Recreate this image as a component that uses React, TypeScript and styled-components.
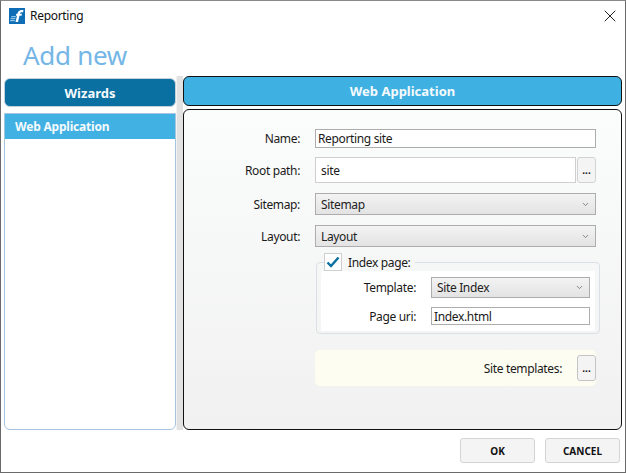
import React from 'react';
import styled, { createGlobalStyle } from 'styled-components';
import { X, ChevronDown } from 'lucide-react';

const GlobalStyle = createGlobalStyle`
  html, body {
    margin: 0;
    padding: 0;
    background: #fff;
  }
  body {
    font-family: "Noto Sans", "Open Sans", sans-serif;
    font-size: 12px;
    color: #1a1a1a;
  }
  * {
    box-sizing: border-box;
  }
`;

const Window = styled.div`
  width: 626px;
  height: 473px;
  display: flex;
  flex-direction: column;
  background: #fff;
  border: 1px solid #6a6a6a;
  border-top-color: #8a8a8a;
`;

const TitleBar = styled.div`
  height: 29px;
  flex: none;
  display: flex;
  align-items: center;
  padding: 0 8px;
  gap: 5px;
`;

const TitleText = styled.span`
  flex: 1;
  font-size: 12px;
  letter-spacing: -0.3px;
  color: #111;
`;

const CloseButton = styled.button`
  width: 20px;
  height: 20px;
  padding: 0;
  margin-right: -3px;
  display: flex;
  align-items: center;
  justify-content: center;
  background: none;
  border: 0;
  color: #222;
`;

const Heading = styled.h1`
  margin: 0;
  height: 46px;
  flex: none;
  padding-left: 22px;
  font-size: 26px;
  font-weight: 400;
  line-height: 50px;
  letter-spacing: -0.3px;
  color: #74b6e6;
`;

const Body = styled.div`
  flex: 1;
  min-height: 0;
  display: flex;
  padding: 0 3px;
`;

const LeftColumn = styled.div`
  width: 172px;
  flex: none;
  display: flex;
  flex-direction: column;
  padding-top: 2px;
  gap: 6px;
`;

const WizardsHeader = styled.div`
  height: 29px;
  flex: none;
  display: flex;
  align-items: center;
  justify-content: center;
  border: 1px solid #c6d2da;
  border-radius: 6px;
  background: #0a6fa1;
  color: #f4fafd;
  font-size: 13px;
  font-weight: 700;
`;

const WizardList = styled.ul`
  flex: 1;
  margin: 0;
  padding: 0;
  list-style: none;
  background: #fff;
  border: 1px solid #a6c4de;
  border-radius: 0 0 6px 6px;
`;

const WizardItem = styled.li`
  height: 25px;
  display: flex;
  align-items: center;
  padding-left: 10px;
  background: #41b0e3;
  color: #f4fafd;
  font-size: 12px;
  font-weight: 700;
  letter-spacing: -0.2px;
`;

const Splitter = styled.div`
  width: 7px;
  flex: none;
  background: #e2e2e2;
  border-left: 1px solid #f2f2f2;
`;

const RightColumn = styled.div`
  flex: 1;
  min-width: 0;
  display: flex;
  flex-direction: column;
  gap: 3px;
`;

const PanelHeader = styled.div`
  height: 30px;
  flex: none;
  display: flex;
  align-items: center;
  justify-content: center;
  background: #3fb0e2;
  border: 1px solid #111;
  border-radius: 6px;
  color: #f4fafd;
  font-size: 13px;
  font-weight: 700;
`;

const Panel = styled.div`
  flex: 1;
  display: flex;
  flex-direction: column;
  padding: 19px 25px 0 131px;
  background: linear-gradient(#fbfcfc, #f1f1f1);
  border: 1px solid #111;
  border-radius: 6px;
`;

const FormRow = styled.div<{ $height: number; $gap: number }>`
  display: grid;
  grid-template-columns: 1fr;
  position: relative;
  height: ${({ $height }) => $height}px;
  margin-bottom: ${({ $gap }) => $gap}px;
`;

const RowLabel = styled.label`
  position: absolute;
  right: calc(100% + 15px);
  top: 50%;
  transform: translateY(-50%);
  white-space: nowrap;
  letter-spacing: -0.35px;
`;

const TextField = styled.div<{ $roomy?: boolean }>`
  display: flex;
  align-items: center;
  height: 100%;
  padding-left: ${({ $roomy }) => ($roomy ? '5px' : '2px')};
  background: #fff;
  border: ${({ $roomy }) => ($roomy ? '1px solid #cfcfcf' : '1px solid #adadad')};
  letter-spacing: -0.35px;
`;

const FieldWithButton = styled.div`
  display: flex;
  gap: 1px;
  height: 100%;
`;

const FieldGrow = styled.div`
  flex: 1;
`;

const DotsButton = styled.button`
  width: 19px;
  height: 100%;
  flex: none;
  padding: 0 0 5px;
  display: flex;
  align-items: flex-end;
  justify-content: center;
  background: #f4f4f4;
  border: 1px solid #d2d2d2;
  border-radius: 3px;
  font-family: inherit;
  font-size: 10px;
  font-weight: 700;
  line-height: 14px;
  color: #111;
`;

const Select = styled.div`
  display: flex;
  align-items: center;
  justify-content: space-between;
  height: 100%;
  padding: 0 5px 0 5px;
  background: linear-gradient(#f3f3f3, #e3e3e3);
  border: 1px solid #adadad;
  letter-spacing: -0.35px;
  color: #222;
`;

const IndexGroup = styled.fieldset`
  margin: 6px -4px 0 1px;
  padding: 0 4px 3px;
  height: 81px;
  border: 1px solid #dbe0e4;
  border-radius: 4px;
`;

const GroupLegend = styled.legend`
  margin-left: 3px;
  padding: 0 4px 0 0;
  height: 18px;
  display: flex;
  align-items: center;
  gap: 6px;
  letter-spacing: -0.35px;
`;

const CheckBox = styled.span`
  width: 18px;
  height: 18px;
  display: flex;
  align-items: center;
  justify-content: center;
  background: #fff;
  border: 1px solid #cfcfcf;
  color: #0a6fa1;
`;

const GroupBody = styled.div`
  display: grid;
  grid-template-columns: 95px 159px;
  grid-template-rows: 21px 18px;
  row-gap: 9px;
  column-gap: 15px;
  align-items: center;
  padding: 6px 0;
  background: #fff;
  height: 60px;
`;

const GroupLabel = styled.label`
  text-align: right;
  letter-spacing: -0.35px;
`;

const TemplatesStrip = styled.div`
  margin-top: 16px;
  height: 36px;
  display: flex;
  align-items: center;
  justify-content: flex-end;
  gap: 15px;
  background: #fdfdf1;
  border-radius: 5px;
  letter-spacing: -0.35px;
`;

const StripButton = styled(DotsButton)`
  height: 26px;
  border-color: #c4c4c4;
`;

const Footer = styled.div`
  height: 42px;
  flex: none;
  display: flex;
  justify-content: flex-end;
  align-items: flex-start;
  gap: 10px;
  padding: 8px 5px 0 0;
`;

const FooterButton = styled.button`
  width: 75px;
  height: 25px;
  background: #f4f4f4;
  border: 1px solid #d4d4d4;
  border-radius: 3px;
  font-family: inherit;
  font-size: 10px;
  font-weight: 700;
  color: #111;
`;

const AppLogo = () => (
  <svg width="16" height="16" viewBox="0 0 16 16" aria-hidden="true">
    <rect width="16" height="16" fill="#0f6db5" />
    <path d="M2.500 8h4.500l-.3 1.200H2zM1.800 10h4.700l-.3 1.200H1.400zM1.200 12h4.800l-.3 1.200H.8z" fill="#8ec4ea" />
    <path
      d="M6.500 14l1.500-6.200H6.900l.4-2h1.200C9 3 11 1.600 14.500 2.300L14 4.500c-1.700-.4-2.700 0-3 1.300h2l-.5 2h-2L9 14z"
      fill="#fff"
    />
  </svg>
);

const SelectArrow = () => <ChevronDown size={9} strokeWidth={2.4} color="#777" />;

export default function App() {
  return (
    <>
      <GlobalStyle />
      <Window>
        <TitleBar>
          <AppLogo />
          <TitleText>Reporting</TitleText>
          <CloseButton>
            <X size={20} strokeWidth={1.2} />
          </CloseButton>
        </TitleBar>
        <Heading>Add new</Heading>
        <Body>
          <LeftColumn>
            <WizardsHeader>Wizards</WizardsHeader>
            <WizardList>
              <WizardItem>Web Application</WizardItem>
            </WizardList>
          </LeftColumn>
          <Splitter />
          <RightColumn>
            <PanelHeader>Web Application</PanelHeader>
            <Panel>
              <FormRow $height={18} $gap={10}>
                <RowLabel>Name:</RowLabel>
                <TextField>Reporting site</TextField>
              </FormRow>
              <FormRow $height={26} $gap={10}>
                <RowLabel>Root path:</RowLabel>
                <FieldWithButton>
                  <FieldGrow>
                    <TextField $roomy>site</TextField>
                  </FieldGrow>
                  <DotsButton>...</DotsButton>
                </FieldWithButton>
              </FormRow>
              <FormRow $height={22} $gap={10}>
                <RowLabel>Sitemap:</RowLabel>
                <Select>
                  Sitemap
                  <SelectArrow />
                </Select>
              </FormRow>
              <FormRow $height={22} $gap={0}>
                <RowLabel>Layout:</RowLabel>
                <Select>
                  Layout
                  <SelectArrow />
                </Select>
              </FormRow>
              <IndexGroup>
                <GroupLegend>
                  <CheckBox>
                    <svg width="14" height="14" viewBox="0 0 14 14" aria-hidden="true">
                      <path d="M1.500 7.500l3.500 3.500 7.500-8.500" fill="none" stroke="currentColor" strokeWidth="2.400" />
                    </svg>
                  </CheckBox>
                  Index page:
                </GroupLegend>
                <GroupBody>
                  <GroupLabel>Template:</GroupLabel>
                  <Select>
                    Site Index
                    <SelectArrow />
                  </Select>
                  <GroupLabel>Page uri:</GroupLabel>
                  <TextField>Index.html</TextField>
                </GroupBody>
              </IndexGroup>
              <TemplatesStrip>
                Site templates:
                <StripButton>...</StripButton>
              </TemplatesStrip>
            </Panel>
          </RightColumn>
        </Body>
        <Footer>
          <FooterButton>OK</FooterButton>
          <FooterButton>CANCEL</FooterButton>
        </Footer>
      </Window>
    </>
  );
}
